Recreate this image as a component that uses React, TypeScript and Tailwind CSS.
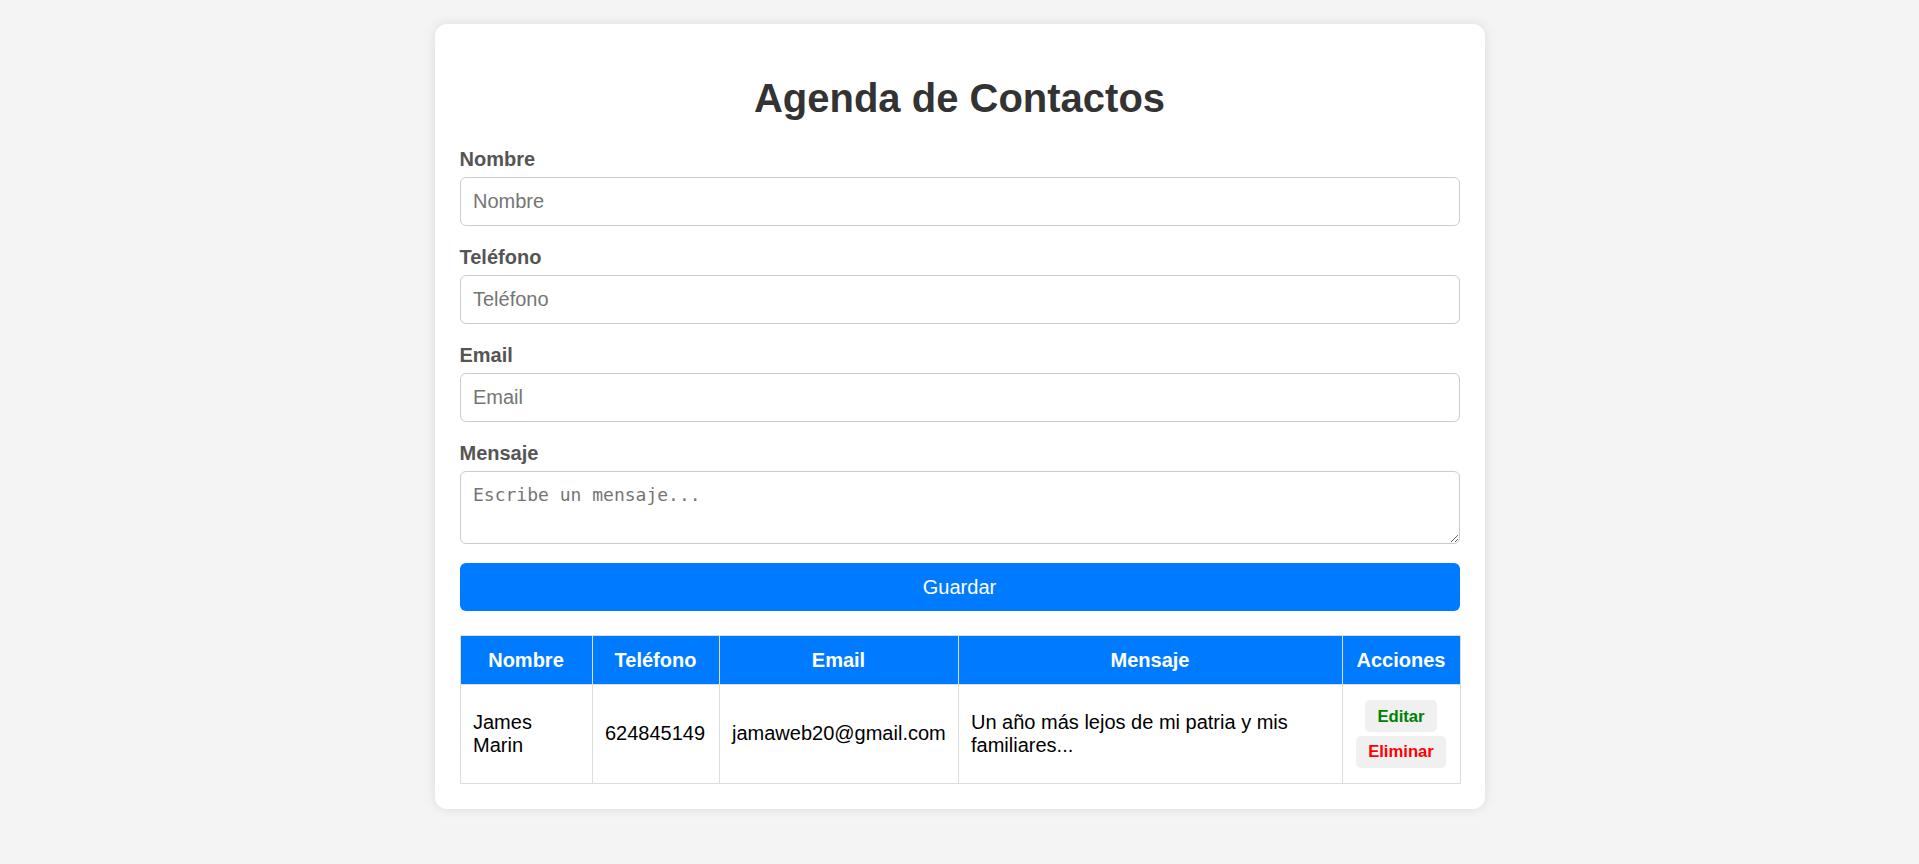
import React from "react";

export default function App() {
  const labelCls = "block font-bold text-[20px] leading-[23px] text-[#555] mb-[6px]";
  const inputCls =
    "block w-full h-[49px] px-[12.5px] border border-[#ccc] rounded-[6px] text-[20px] text-black placeholder:text-[#757575] outline-none bg-white mb-[20px]";
  const thCls =
    "bg-[#007bff] text-white font-bold text-[20px] leading-[23px] border border-[#ddd] px-[12px] py-[12.5px] text-center";
  const tdCls = "border border-[#ddd] px-[12.5px] py-[12.5px] text-[20px] leading-[23px] text-black align-middle text-left";
  return (
    <div className="min-h-screen bg-[#f4f4f4] pt-[24px] pb-[40px] font-['Liberation_Sans',Arial,sans-serif]">
      <div className="mx-auto w-[1050px] bg-white rounded-[12px] shadow-[0_0_12px_rgba(0,0,0,0.1)] p-[25px]">
        <h1 className="text-center text-[40px] leading-[46px] font-bold text-[#333] mt-[26px] mb-[27px]">
          Agenda de Contactos
        </h1>
        <label className={labelCls}>Nombre</label>
        <input className={inputCls} placeholder="Nombre" />
        <label className={labelCls}>Teléfono</label>
        <input className={inputCls} placeholder="Teléfono" />
        <label className={labelCls}>Email</label>
        <input className={inputCls} placeholder="Email" />
        <label className={labelCls}>Mensaje</label>
        <textarea
          className="block w-full h-[73px] px-[12.5px] py-[11px] border border-[#ccc] rounded-[6px] text-[18px] leading-[23px] font-['DejaVu_Sans_Mono','Liberation_Mono',monospace] placeholder:text-[#757575] outline-none resize-y mb-[19px]"
          placeholder="Escribe un mensaje..."
        />
        <button className="block w-full h-[48px] bg-[#007bff] text-white text-[20px] rounded-[6px] mb-[24px]">
          Guardar
        </button>
        <table className="w-full border-collapse table-fixed">
          <colgroup>
            <col className="w-[132px]" />
            <col className="w-[127px]" />
            <col className="w-[239px]" />
            <col className="w-[384px]" />
            <col className="w-[118px]" />
          </colgroup>
          <thead>
            <tr>
              <th className={thCls}>Nombre</th>
              <th className={thCls}>Teléfono</th>
              <th className={thCls}>Email</th>
              <th className={thCls}>Mensaje</th>
              <th className={thCls}>Acciones</th>
            </tr>
          </thead>
          <tbody>
            <tr>
              <td className={tdCls}>James Marin</td>
              <td className={tdCls + " whitespace-nowrap"}>624845149</td>
              <td className={tdCls + " whitespace-nowrap"}>jamaweb20@gmail.com</td>
              <td className={tdCls}>Un año más lejos de mi patria y mis familiares...</td>
              <td className="border border-[#ddd] px-[6px] py-[12.5px] align-middle">
                <div className="flex flex-col items-center gap-[3.5px] py-[2.5px]">
                  <button className="px-[12.5px] py-[6.5px] text-[16.67px] leading-[19px] font-bold text-[#008000] bg-[#f0f0f0] rounded-[5px]">
                    Editar
                  </button>
                  <button className="px-[12.5px] py-[6.5px] text-[16.67px] leading-[19px] font-bold text-[#ff0000] bg-[#f0f0f0] rounded-[5px]">
                    Eliminar
                  </button>
                </div>
              </td>
            </tr>
          </tbody>
        </table>
      </div>
    </div>
  );
}
